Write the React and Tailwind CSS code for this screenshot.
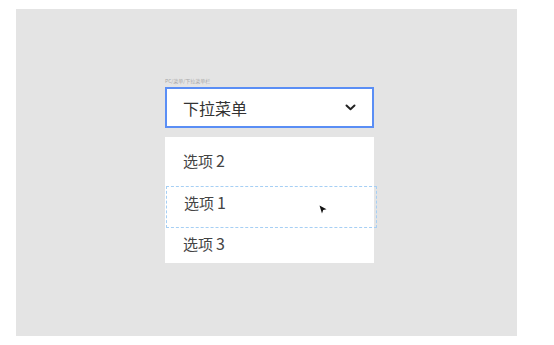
import React from 'react';

const Chevron = () => (
  <svg width="11" height="7" viewBox="0 0 11 7" fill="none">
    <path d="M1.5 1.5 L5.5 5.2 L9.5 1.5" stroke="#222" strokeWidth="2" strokeLinecap="round" strokeLinejoin="round" />
  </svg>
);

const Cursor = () => (
  <svg width="8" height="9" viewBox="0 0 8 9">
    <path d="M0.5 0.5 L7.5 4.2 L4.2 5 L3 8.5 Z" fill="#111" />
  </svg>
);

// digit is set a little apart, as in the mock
const Option = ({ n }) => (
  <span className="text-[15px] text-[#444]">
    选项<span className="ml-[3px] text-[16px]">{n}</span>
  </span>
);

const App = () => {
  return (
    <div className="w-[554px] h-[345px] bg-white pt-[9px] pl-[16px]" style={{ fontFamily: '"Noto Sans CJK SC", "Noto Sans", sans-serif' }}>
      <div className="w-[501px] h-[327px] bg-[#e4e4e4] pt-[69px] pl-[149px]">
        <div className="w-[209px]">
          <div className="text-[5px] leading-[6px] text-[#a8a8a8] mb-[3px]">PC/菜单/下拉菜单栏</div>

          <div className="h-[41px] bg-white border-2 border-[#5a8ef5] flex items-center justify-between pl-[16px] pr-[16px]">
            <span className="text-[16px] text-[#333]">下拉菜单</span>
            <Chevron />
          </div>

          <div className="mt-[9px] h-[126px] bg-white pt-[3px] flex flex-col">
            <div className="h-[42px] flex items-center pl-[18px] pb-[2px]">
              <Option n="2" />
            </div>
            <div className="mt-[4px] h-[42px] -mr-[3px] ml-[1px] border-[1.5px] border-dashed border-[#a6cff4] flex items-center pl-[17px] pb-[9px] relative">
              <Option n="1" />
              <span className="absolute left-[152px] top-[18px]">
                <Cursor />
              </span>
            </div>
            <div className="flex-1 flex items-center pl-[18px] pb-[4px]">
              <Option n="3" />
            </div>
          </div>
        </div>
      </div>
    </div>
  );
};

export default App;
